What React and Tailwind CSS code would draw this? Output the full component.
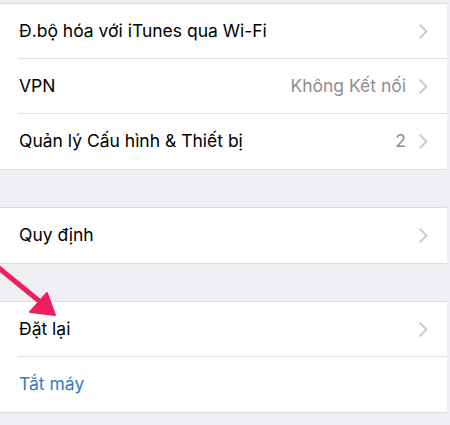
function Chevron() {
  return (
    <svg width="9" height="15" viewBox="0 0 9 15" className="shrink-0">
      <path d="M1.2 1.2 L7.4 7.5 L1.2 13.8" fill="none" stroke="#c7c7cc" strokeWidth="1.8" strokeLinecap="round" strokeLinejoin="round" />
    </svg>
  )
}

function Row({ label, value, chevron = true, divider = false, blue = false }) {
  return (
    <div className="relative flex h-[55px] items-center pl-[19px] pr-[19px]">
      <span className={`flex-1 text-[17.5px] ${blue ? 'text-[#3479c4]' : 'text-black'}`}>{label}</span>
      {value && <span className="mr-[13px] text-[17.5px] text-[#8e8e93]">{value}</span>}
      {chevron && <Chevron />}
      {divider && <div className="absolute bottom-0 left-[18px] right-0 h-px bg-[#e2e2e6]" />}
    </div>
  )
}

function Group({ children }) {
  return <div className="border-y border-[#dcdce0] bg-white">{children}</div>
}

export default function App() {
  return (
    <div className="relative h-[425px] w-[450px] overflow-hidden bg-[#efeff4] pr-[3px] pt-[3px] font-['Inter','Liberation_Sans',sans-serif]">
      <Group>
        <Row label="Đ.bộ hóa với iTunes qua Wi-Fi" divider />
        <Row label="VPN" value="Không Kết nối" divider />
        <Row label="Quản lý Cấu hình & Thiết bị" value="2" />
      </Group>
      <div className="h-[37px]" />
      <Group>
        <Row label="Quy định" />
      </Group>
      <div className="h-[37px]" />
      <Group>
        <Row label="Đặt lại" divider />
        <Row label="Tắt máy" chevron={false} blue />
      </Group>

      {/* pointer arrow */}
      <svg className="pointer-events-none absolute left-0 top-[250px]" width="70" height="80" viewBox="0 0 70 80">
        <path d="M-6 14 L38 50" stroke="#ee1f5f" strokeWidth="5" strokeLinecap="round" />
        <path d="M30 62 L47 43 L55 65 Z" fill="#ee1f5f" stroke="#ee1f5f" strokeWidth="2" strokeLinejoin="round" />
      </svg>
    </div>
  )
}
